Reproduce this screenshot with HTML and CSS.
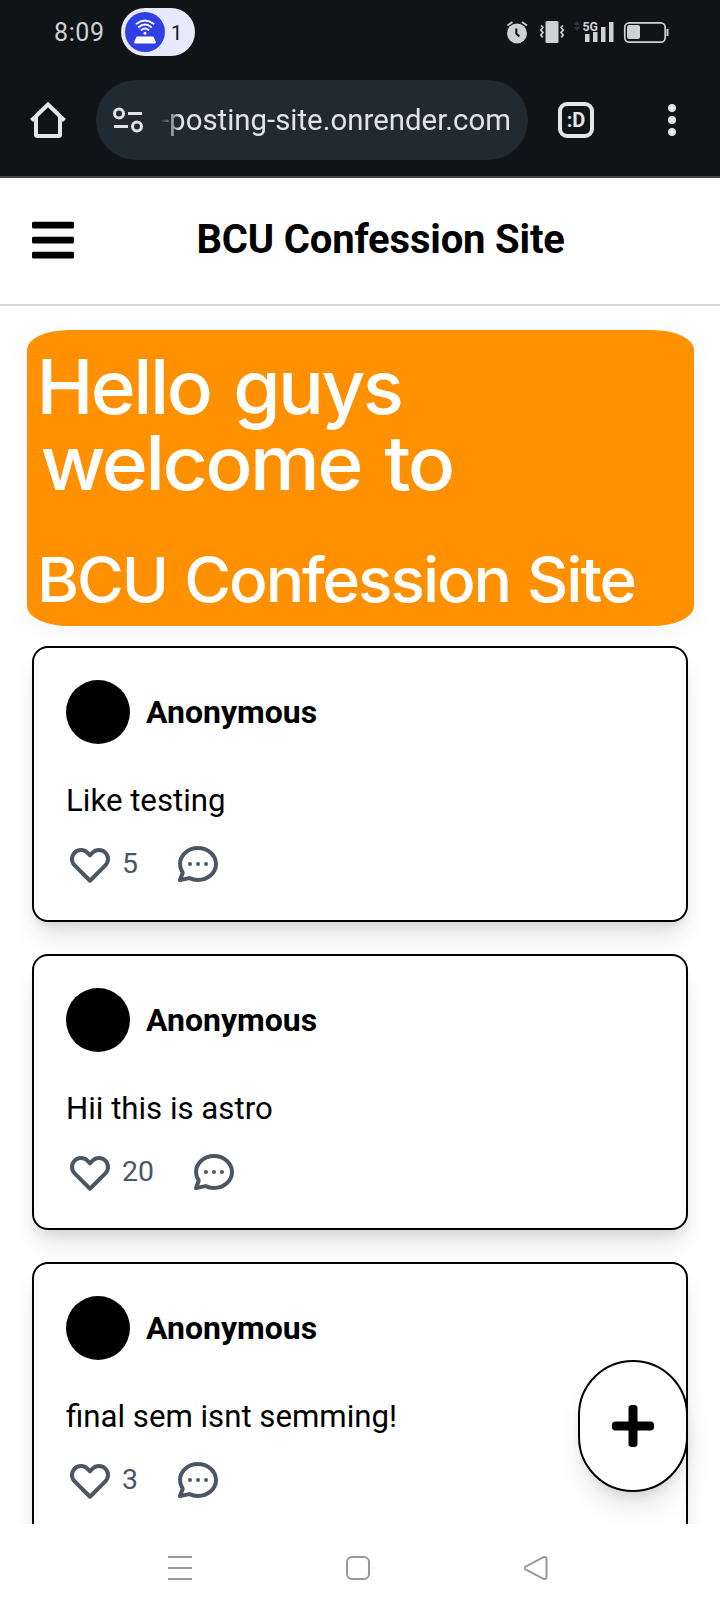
FILE: index.html
```html
<!DOCTYPE html>
<html lang="en">
<head>
<meta charset="utf-8">
<title>BCU Confession Site</title>
<link rel="stylesheet" href="styles.css">
</head>
<body>
<svg class="defs" width="0" height="0" aria-hidden="true">
  <symbol id="heart" viewBox="0 0 24 24"><path fill="none" stroke="currentColor" stroke-width="2" stroke-linecap="round" stroke-linejoin="round" d="M4.318 6.318a4.5 4.5 0 000 6.364L12 20.364l7.682-7.682a4.5 4.5 0 00-6.364-6.364L12 7.636l-1.318-1.318a4.5 4.5 0 00-6.364 0z"/></symbol>
  <symbol id="chat" viewBox="0 0 24 24"><path fill="none" stroke="currentColor" stroke-width="2" stroke-linecap="round" stroke-linejoin="round" d="M8 12h.01M12 12h.01M16 12h.01M21 12c0 4.418-4.03 8-9 8a9.863 9.863 0 01-4.255-.949L3 20l1.395-3.72C3.512 15.042 3 13.574 3 12c0-4.418 4.03-8 9-8s9 3.582 9 8z"/></symbol>
</svg>
<div class="phone">
  <div class="chrome">
    <div class="status">
      <span class="clock">8:09</span>
      <div class="chip">
        <svg width="40" height="40" viewBox="0 0 40 40">
          <circle cx="20" cy="20" r="20" fill="#3040e6"/>
          <g fill="none" stroke="#fff" stroke-width="1.9" stroke-linecap="round">
            <path d="M11.500 11.700Q20 5.100 28.500 11.700M13.800 15Q20 9.900 26.200 15M16.400 18Q20 15.100 23.600 18"/>
          </g>
          <circle cx="20" cy="21.200" r="1.500" fill="#fff"/>
          <path d="M12.500 24.500h15q1.200 0 1.500 1.200l1.800 4.300q.4 1.500-1.200 1.500h-19.200q-1.600 0-1.200-1.500l1.800-4.300q.3-1.200 1.500-1.200z" fill="#fff"/>
        </svg>
        <span class="chip-count">1</span>
      </div>
      <svg class="status-icons" width="170" height="28" viewBox="504 18 170 28">
        <g fill="#cfd1d2">
          <circle cx="517" cy="33.400" r="10"/>
          <rect x="545.500" y="21" width="13" height="22" rx="1.500"/>
          <path d="M585 34h4.500v8h-4.500zM593 32h4.500v10h-4.500zM601 27h4.500v15h-4.500zM609 22h4.500v20h-4.500z"/>
          <rect x="627" y="25" width="13" height="14" rx="2"/>
        </g>
        <g fill="none" stroke="#cfd1d2" stroke-width="1.700">
          <path d="M507.500 25.500l5-3.500M527 25.500l-5-3.500"/>
          <path d="M541 25.500l2 2-2.200 2.500 2.200 2.500-2.200 2.500 2 2.500M563 25.500l-2 2 2.200 2.500-2.200 2.500 2.200 2.500-2 2.500"/>
          <rect x="624.800" y="22.800" width="40.400" height="19.400" rx="4.500"/>
          <path d="M667.500 29v7" stroke-width="2"/>
        </g>
        <path d="M516.300 28.500v5l3 3" fill="none" stroke="#111417" stroke-width="2"/>
        <path d="M574 25l3-4 3 4zM574 27l3 4 3-4z" fill="#34383b"/>
        <text x="582.500" y="31" class="net" textLength="15.500" lengthAdjust="spacingAndGlyphs">5G</text>
      </svg>
    </div>
    <div class="toolbar">
      <svg class="home" width="36" height="36" viewBox="0 0 36 36"><path d="M1.500 18.500L18 2.500l16.500 16M6 15v17.500q0 1.500 1.500 1.500h21q1.500 0 1.500-1.500V15" fill="none" stroke="#e3e6ea" stroke-width="4"/></svg>
      <div class="omnibox">
        <svg width="30" height="26" viewBox="0 0 30 26"><g fill="none" stroke="#dfe4e9" stroke-width="3"><circle cx="6" cy="6.500" r="4.500"/><circle cx="24" cy="19.500" r="4.500"/><path d="M15 6.500h14M1 19.500h14"/></g></svg>
        <svg class="url" width="354" height="50" viewBox="160 95 354 50">
          <text x="161" y="130.300" textLength="350" lengthAdjust="spacingAndGlyphs">-posting-site.onrender.com</text>
        </svg>
      </div>
      <div class="tabs">:D</div>
      <svg class="more" width="8" height="32" viewBox="0 0 8 32"><g fill="#e3e6ea"><circle cx="4" cy="4" r="4"/><circle cx="4" cy="16" r="4"/><circle cx="4" cy="28" r="4"/></g></svg>
    </div>
  </div>
  <header class="site-header">
    <svg width="42" height="48" viewBox="0 0 448 512"><path d="M16 132h416c8.837 0 16-7.163 16-16V76c0-8.837-7.163-16-16-16H16C7.163 60 0 67.163 0 76v40c0 8.837 7.163 16 16 16zm0 160h416c8.837 0 16-7.163 16-16v-40c0-8.837-7.163-16-16-16H16c-8.837 0-16 7.163-16 16v40c0 8.837 7.163 16 16 16zm0 160h416c8.837 0 16-7.163 16-16v-40c0-8.837-7.163-16-16-16H16c-8.837 0-16 7.163-16 16v40c0 8.837 7.163 16 16 16z"/></svg>
    <h1>BCU Confession Site</h1>
  </header>
  <main class="feed">
    <svg class="banner" width="667" height="296" viewBox="26.500 330 667 296">
      <text x="36" y="414.300" font-size="75" textLength="365" lengthAdjust="spacingAndGlyphs">Hello guys</text>
      <text x="40" y="490" font-size="75" textLength="412" lengthAdjust="spacingAndGlyphs">welcome to</text>
      <text class="site-name" x="36.500" y="602" font-size="61.500" textLength="598" lengthAdjust="spacingAndGlyphs">BCU Confession Site</text>
    </svg>
    <article class="card">
      <div class="author"><span class="avatar"></span><b>Anonymous</b></div>
      <p>Like testing</p>
      <div class="actions"><svg class="icon"><use href="#heart"/></svg><span class="likes">5</span><svg class="icon"><use href="#chat"/></svg></div>
    </article>
    <article class="card">
      <div class="author"><span class="avatar"></span><b>Anonymous</b></div>
      <p>Hii this is astro</p>
      <div class="actions"><svg class="icon"><use href="#heart"/></svg><span class="likes">20</span><svg class="icon"><use href="#chat"/></svg></div>
    </article>
    <article class="card">
      <div class="author"><span class="avatar"></span><b>Anonymous</b></div>
      <p>final sem isnt semming!</p>
      <div class="actions"><svg class="icon"><use href="#heart"/></svg><span class="likes">3</span><svg class="icon"><use href="#chat"/></svg></div>
    </article>
    <button class="fab" aria-label="New post"><svg width="42" height="48" viewBox="0 0 448 512"><path d="M416 208H272V64c0-17.670-14.330-32-32-32h-32c-17.670 0-32 14.330-32 32v144H32c-17.670 0-32 14.330-32 32v32c0 17.670 14.330 32 32 32h144v144c0 17.670 14.330 32 32 32h32c17.670 0 32-14.330 32-32V304h144c17.670 0 32-14.330 32-32v-32c0-17.670-14.330-32-32-32z"/></svg></button>
  </main>
  <nav class="sysnav">
    <svg width="24" height="24" viewBox="0 0 24 24"><path d="M0 1h24M0 12h24M0 23h24"/></svg>
    <svg width="24" height="24" viewBox="0 0 24 24"><rect x="1" y="1" width="22" height="22" rx="5"/></svg>
    <svg width="24" height="24" viewBox="0 0 24 24"><path d="M1.500 10.600L19.500 1.200Q22.500 .3 22.500 3v18q0 2.700-3 1.800L1.500 13.400Q-.3 12 1.500 10.600z"/></svg>
  </nav>
</div>
</body>
</html>
```
FILE: styles.css
```css
* { box-sizing: border-box; }
body { margin: 0; font-family: Roboto, sans-serif; color: #000; background: #fff; }
svg { display: block; flex: none; }
.defs { position: absolute; }
.phone { width: 720px; height: 1612px; display: flex; flex-direction: column; overflow: hidden; }

.chrome { height: 178px; flex: none; background: #111417; border-bottom: 2px solid #424548; }
.status { height: 64px; display: flex; align-items: center; padding: 0 46px 0 54px; }
.clock { width: 67px; padding-top: 1px; font-size: 25px; letter-spacing: .6px; color: #cfd1d2; white-space: nowrap; }
.chip { width: 74px; height: 48px; border-radius: 24px; background: #e8eafc; display: flex; align-items: center; padding-left: 4px; gap: 6px; }
.chip-count { padding-top: 1px; font-size: 20px; color: #15171c; }
.status-icons { margin-left: auto; }
.net { font: 700 13px Roboto, sans-serif; fill: #cfd1d2; }
.toolbar { height: 80px; margin-top: 16px; display: flex; align-items: center; padding: 0 44px 0 30px; }
.omnibox { width: 432px; height: 80px; margin-left: 30px; border-radius: 40px; background: #202a32; display: flex; align-items: center; padding-left: 17px; gap: 17px; }
.url { font: 400 30px Roboto, sans-serif; fill: #dfe4e9; -webkit-mask-image: linear-gradient(90deg, transparent, #000 20px); mask-image: linear-gradient(90deg, transparent, #000 20px); }
.tabs { width: 36px; height: 36px; margin-left: 30px; border: 4px solid #e3e6ea; border-radius: 9px; color: #e3e6ea; font-size: 20px; font-weight: 700; line-height: 28px; text-align: center; }
.more { margin-left: auto; }

.site-header { height: 128px; flex: none; border-bottom: 2px solid #d1d5db; padding: 0 0 2px 32px; display: flex; align-items: center; }
.site-header h1 { margin: 0 0 0 122.5px; font-size: 40px; line-height: 56px; font-weight: 700; letter-spacing: -.18px; white-space: nowrap; }

.feed { position: relative; flex: 1; min-height: 0; overflow: hidden; padding: 24px 32px 0; }
.banner { margin: 0 0 20px -5.5px; background: #ff9100; border-radius: 42px / 20px; box-shadow: 0 10px 30px rgba(0, 0, 0, .04); font-family: Inter, sans-serif; font-weight: 500; letter-spacing: -2.5px; word-spacing: 5px; fill: #fff; }
.site-name { letter-spacing: -2px; word-spacing: 2px; }
.card { height: 276px; margin-bottom: 32px; padding: 32px; border: 2px solid #000; border-radius: 16px; background: #fff; box-shadow: 0 20px 30px -6px rgba(0, 0, 0, .1), 0 8px 12px -4px rgba(0, 0, 0, .1); }
.author { display: flex; align-items: center; gap: 16px; height: 64px; font-size: 32px; }
.avatar { width: 64px; height: 64px; border-radius: 50%; background: #000; }
.card p { margin: 33px 0 15px; font-size: 31.2px; line-height: 48px; white-space: nowrap; }
.actions { display: flex; align-items: center; height: 48px; color: #4b5563; }
.icon { width: 48px; height: 48px; }
.likes { margin: 0 36px 0 8px; font-size: 28.4px; line-height: 40px; }
.fab { position: absolute; right: 32px; bottom: 32px; width: 110px; height: 132px; padding: 0; display: flex; align-items: center; justify-content: center; background: #fff; border: 2px solid #000; border-radius: 55px; box-shadow: 0 20px 30px -6px rgba(0, 0, 0, .1), 0 8px 12px -4px rgba(0, 0, 0, .1); }

.sysnav { height: 88px; flex: none; background: #fff; display: flex; align-items: center; padding-left: 168px; gap: 154px; }
.sysnav svg { fill: none; stroke: #999; stroke-width: 2; }
```
